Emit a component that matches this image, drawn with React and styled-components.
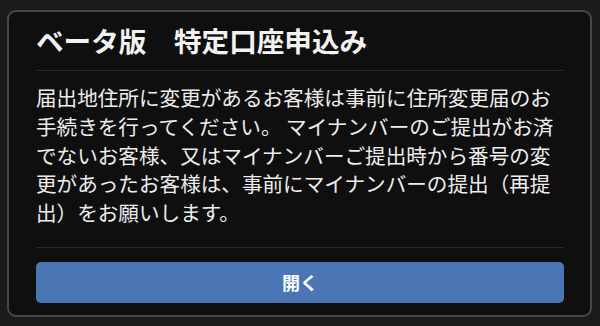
import React from 'react';
import styled, { createGlobalStyle } from 'styled-components';

const GlobalStyle = createGlobalStyle`
  html, body {
    margin: 0;
    padding: 0;
    background: #1b1b1b;
  }
  body {
    font-family: "Noto Sans CJK JP", "Noto Sans", sans-serif;
  }
`;

// Outer page area around the dialog card
const Page = styled.div`
  width: 600px;
  height: 326px;
  box-sizing: border-box;
  padding: 10px 8px 9px 7px;
  display: flex;
`;

// Dark card with a light rounded border
const Card = styled.div`
  flex: 1;
  box-sizing: border-box;
  background: #0f0f0f;
  border: 2px solid #474747;
  border-radius: 9px;
  padding: 11px 26px 12px 27px;
  display: flex;
  flex-direction: column;
`;

const Title = styled.h1`
  margin: 0;
  font-size: 27.6px;
  font-weight: 700;
  line-height: 35px;
  color: #f2f2f2;
  white-space: pre;
`;

const Divider = styled.div`
  height: 1px;
  background: #2c2c2c;
  margin: ${({ $top }) => $top}px 0 ${({ $bottom }) => $bottom}px;
`;

const Body = styled.p`
  margin: 0;
  font-size: 20.6px;
  line-height: 28.8px;
  font-weight: 400;
  color: #ededed;
`;

const Button = styled.button`
  height: 41px;
  border: none;
  border-radius: 5px;
  background: #4a76b5;
  color: #ffffff;
  font-family: "Noto Sans CJK JP", "Noto Sans", sans-serif;
  font-size: 18px;
  font-weight: 700;
  cursor: pointer;
  &:hover {
    opacity: 0.9;
  }
`;

export default function App() {
  return (
    <>
      <GlobalStyle />
      <Page>
        <Card>
          <Title>ベータ版　特定口座申込み</Title>
          <Divider $top={12} $bottom={12} />
          <Body>
            届出地住所に変更があるお客様は事前に住所変更届のお手続きを行ってください。 マイナンバーのご提出がお済でないお客様、又はマイナンバーご提出時から番号の変更があったお客様は、事前にマイナンバーの提出（再提出）をお願いします。
          </Body>
          <Divider $top={20} $bottom={14} />
          <Button>開く</Button>
        </Card>
      </Page>
    </>
  );
}
